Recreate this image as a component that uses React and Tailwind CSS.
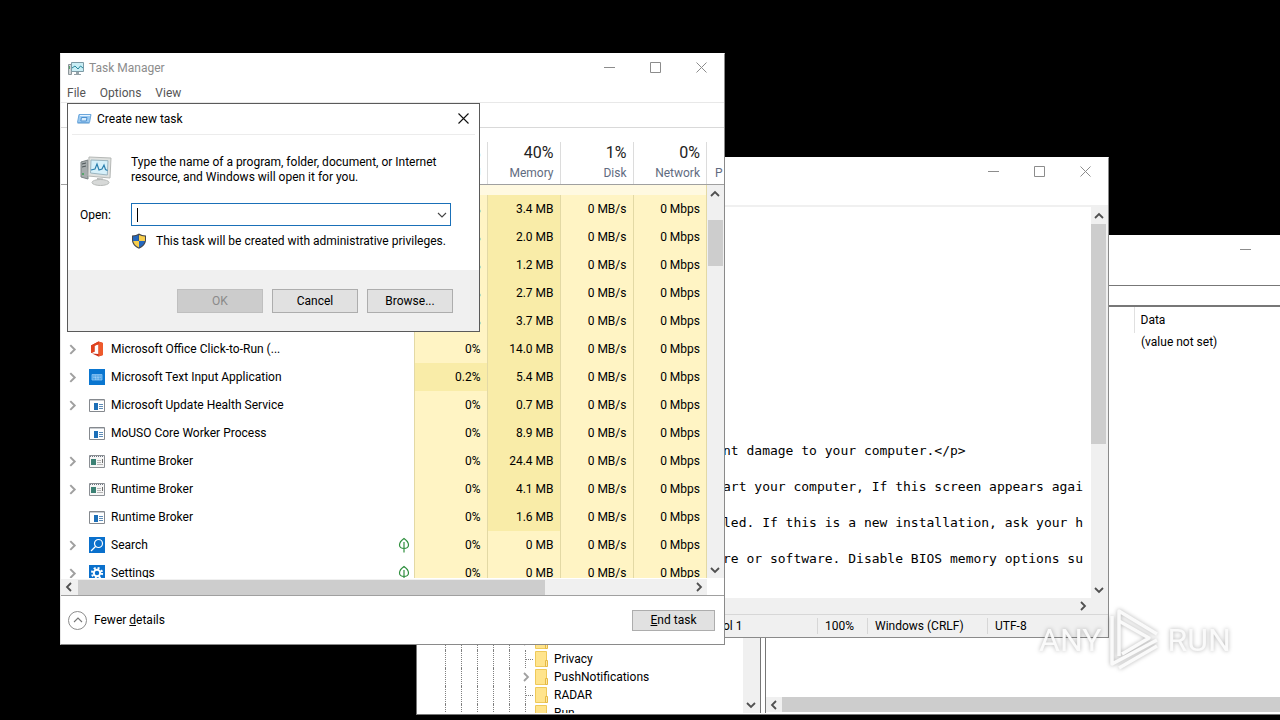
import clsx from "clsx";

const procesos = [
  { name: "", mem: "3.4 MB" },
  { name: "", mem: "2.0 MB" },
  { name: "", mem: "1.2 MB" },
  { name: "", mem: "2.7 MB" },
  { name: "", mem: "3.7 MB" },
  { name: "Microsoft Office Click-to-Run (...", icon: "office", open: true, mem: "14.0 MB" },
  { name: "Microsoft Text Input Application", icon: "keyboard", open: true, cpu: "0.2%", mem: "5.4 MB" },
  { name: "Microsoft Update Health Service", icon: "app", open: true, mem: "0.7 MB" },
  { name: "MoUSO Core Worker Process", icon: "app", mem: "8.9 MB" },
  { name: "Runtime Broker", icon: "broker", open: true, mem: "24.4 MB" },
  { name: "Runtime Broker", icon: "broker", open: true, mem: "4.1 MB" },
  { name: "Runtime Broker", icon: "app", mem: "1.6 MB" },
  { name: "Search", icon: "search", open: true, leaf: true, mem: "0 MB" },
  { name: "Settings", icon: "gear", open: true, leaf: true, mem: "0 MB" },
];

const treeItems = [
  { name: "PrecisionTouchPad", open: true },
  { name: "Privacy" },
  { name: "PushNotifications", open: true },
  { name: "RADAR" },
  { name: "Run" },
];

const noteLines = [
  "nt damage to your computer.</p>",
  "art your computer, If this screen appears agai",
  "led. If this is a new installation, ask your h",
  "re or software. Disable BIOS memory options su",
];

function Chevron({ dir, className = "size-2.5 text-[#505050]", thin }) {
  const paths = {
    up: "M1 7 5 3l4 4",
    down: "M1 3l4 4 4-4",
    left: "M7 1 3 5l4 4",
    right: "M3 1l4 4-4 4",
  };
  return (
    <svg viewBox="0 0 10 10" className={clsx("shrink-0", className)} fill="none" stroke="currentColor" strokeWidth={thin ? 1.1 : 1.8}>
      <path d={paths[dir]} />
    </svg>
  );
}

function ScrollButton({ dir }) {
  return (
    <button aria-label={"Scroll " + dir} className="flex h-[17px] w-4 shrink-0 items-center justify-center bg-[#f0f0f0]">
      <Chevron dir={dir} />
    </button>
  );
}

function WindowButtons() {
  return (
    <div className="flex text-[#8c8c8c]">
      <button aria-label="Minimize" className="flex h-[27px] w-[46px] items-center justify-center">
        <svg viewBox="0 0 11 11" className="size-[11px]" stroke="currentColor"><path d="M0 5.5h11" /></svg>
      </button>
      <button aria-label="Maximize" className="flex h-[27px] w-[46px] items-center justify-center">
        <svg viewBox="0 0 11 11" className="size-[11px]" fill="none" stroke="currentColor"><path d="M.5.5h10v10H.5z" /></svg>
      </button>
      <button aria-label="Close" className="flex h-[27px] w-[46px] items-center justify-center">
        <svg viewBox="0 0 11 11" className="size-[11px]" stroke="currentColor"><path d="m.5.5 10 10M10.5.5l-10 10" /></svg>
      </button>
    </div>
  );
}

function ProcessIcon({ type }) {
  if (type === "office") {
    return (
      <svg viewBox="0 0 16 16" className="size-4">
        <path d="M2 4.500 9.500.5 14 2v12l-4.500 1.500L3 12.500l6.500.6V3.300L5.500 4.800v6L2 12z" fill="#c8301c" />
        <path d="M9.500.5 14 2v12l-4.500 1.500z" fill="#ee5a2c" />
        <path d="M2 4.500 9.500.5v2.800L5.500 4.800v6L2 12z" fill="#e0431f" />
      </svg>
    );
  }
  if (type === "keyboard") {
    return (
      <svg viewBox="0 0 16 16" className="size-4">
        <path d="M0 0h16v16H0z" fill="#0a76d0" />
        <path d="M3 5.500h10v5.500H3z" fill="#4fa3e6" stroke="#8cc6f5" strokeWidth=".8" />
        <path d="M4.500 7h7M4.500 8.500h7M6 10h4" stroke="#cfe8fc" strokeWidth=".7" strokeDasharray="1 .6" />
      </svg>
    );
  }
  if (type === "search") {
    return (
      <svg viewBox="0 0 16 16" className="size-4" fill="none">
        <path d="M0 0h16v16H0z" fill="#0a70cc" />
        <circle cx="9.500" cy="6.500" r="4" stroke="#fff" strokeWidth="1.200" />
        <path d="m6.500 9.500-4.500 4.500" stroke="#fff" strokeWidth="1.200" />
      </svg>
    );
  }
  if (type === "gear") {
    return (
      <svg viewBox="0 0 16 16" className="size-4" fill="none">
        <path d="M0 0h16v16H0z" fill="#0a70cc" />
        <circle cx="8" cy="8" r="5" stroke="#fff" strokeWidth="2.200" strokeDasharray="2 1.927" />
        <circle cx="8" cy="8" r="3.200" stroke="#fff" strokeWidth="2" />
      </svg>
    );
  }
  if (type === "broker") {
    return (
      <svg viewBox="0 0 16 16" className="size-4">
        <path d="M.5 2.500h15v12H.5z" fill="#f6f6f6" stroke="#8b8f94" />
        <path d="M1 3.500h14" stroke="#6c7480" strokeWidth="1.200" strokeDasharray="1 1" />
        <path d="M2 6h5v6H2z" fill="#3b8074" />
        <path d="M8 7.500h4M8 9.500h4M8 11.500h6" stroke="#b5b5b5" />
        <path d="M13.500 6v4" stroke="#6c6c6c" />
      </svg>
    );
  }
  return (
    <svg viewBox="0 0 16 16" className="size-4">
      <path d="M.5 2.500h15v12H.5z" fill="#fff" stroke="#85898e" />
      <path d="M1 3.500h14" stroke="#c9cdd2" />
      <path d="M5 6h4v7H5z" fill="#1c6fb8" />
      <path d="M10 7.500h4M10 9.500h4M10 11.500h4" stroke="#5f8db8" />
    </svg>
  );
}

function Leaf() {
  return (
    <svg viewBox="0 0 12 16" className="h-4 w-3" fill="none" stroke="#2f8f3e" strokeWidth="1.200">
      <path d="M6 1.500C9 3.500 10.500 5.500 10.500 8c0 2-2 3.500-4.500 3.500S1.500 10 1.500 8C1.500 5.500 3 3.500 6 1.500zM6 5v10.500" />
    </svg>
  );
}

function Columns() {
  return (
    <colgroup>
      <col className="w-[353px]" />
      <col className="w-[73px]" />
      <col className="w-[73px]" />
      <col className="w-[73px]" />
      <col className="w-[73px]" />
    </colgroup>
  );
}

function Usage({ value, dark }) {
  return (
    <td className={clsx("border-l border-[#e3d9a5] pr-1.5 text-right", dark ? "bg-[#f9eca8]" : "bg-[#fff4c4]")}>
      {value}
    </td>
  );
}

function HeaderCell({ value, label }) {
  return (
    <th className="border-l border-[#dcdcdc] pr-1.5 text-right font-normal">
      <span className="block text-base leading-5 text-[#222]">{value}</span>
      <span className="block leading-5 text-[#5f6b80]">{label}</span>
    </th>
  );
}

function RegistryEditor() {
  return (
    <section className="absolute top-[235px] left-[416px] w-[945px] border border-t-white border-r-[#777] border-b-[#777] border-l-[#777] bg-white">
      <div className="flex h-7 justify-end">
        <WindowButtons />
      </div>
      <div className="h-[21px]" />
      <div className="h-[22px] border-t border-b-2 border-[#777]" />
      <div className="flex h-[407px] pb-px">
        <div className="flex w-[343px] shrink-0">
          <ul className="flex-1 overflow-hidden pt-[325px]">
            {treeItems.map((item) => (
              <li key={item.name} className="flex h-[18px] items-center pl-7">
                <span className="h-full w-4 border-l border-dotted border-[#808080]" />
                <span className="h-full w-4 border-l border-dotted border-[#808080]" />
                <span className="h-full w-4 border-l border-dotted border-[#808080]" />
                <span className="h-full w-4 border-l border-dotted border-[#808080]" />
                <span className="h-full w-3 border-l border-dotted border-[#808080]" />
                {item.open ? (
                  <span className="flex w-3.5">
                    <Chevron dir="right" className="size-2.5 text-[#a0a0a0]" />
                  </span>
                ) : (
                  <span className="flex h-full w-3.5 items-center pl-1">
                    <span className="flex h-full w-2 items-center border-l border-dotted border-[#808080]">
                      <span className="w-full border-t border-dotted border-[#808080]" />
                    </span>
                  </span>
                )}
                <svg viewBox="0 0 13 16" className="h-4 w-[13px]">
                  <path d="M.5.5h11v15H.5z" fill="#ffe48c" stroke="#eec95a" />
                  <path d="M10.500 9.500h2v6h-2z" fill="#ffe9a2" stroke="#e5b945" />
                </svg>
                <span className="pl-1.5">{item.name}</span>
              </li>
            ))}
          </ul>
          <div className="flex w-[17px] flex-col justify-end bg-[#f0f0f0]">
            <ScrollButton dir="down" />
          </div>
        </div>
        <div className="w-1.5 shrink-0 border-x border-[#777]" />
        <div className="flex flex-1 flex-col justify-between">
          <table className="w-full table-fixed border-collapse text-left">
            <colgroup>
              <col className="w-[368px]" />
              <col />
            </colgroup>
            <thead>
              <tr className="h-[26px]">
                <th />
                <th className="border-l border-[#e0e0e0] pl-1.5 font-normal">Data</th>
              </tr>
            </thead>
            <tbody>
              <tr className="h-[18px]">
                <td />
                <td className="pl-[7px]">(value not set)</td>
              </tr>
            </tbody>
          </table>
          <div className="mb-px flex h-[15px] items-center overflow-hidden bg-[#f0f0f0]">
            <ScrollButton dir="left" />
            <div className="h-full flex-1 bg-[#cdcdcd]" />
          </div>
        </div>
      </div>
    </section>
  );
}

function Notepad() {
  return (
    <section className="absolute top-[157px] left-[480px] w-[629px] border border-t-white border-r-[#8a8a8a] border-b-[#8a8a8a] border-l-[#e6e6e6] bg-white">
      <div className="flex h-7 justify-end">
        <WindowButtons />
      </div>
      <div className="h-[21px] border-b-2 border-[#f0f0f0]" />
      <div className="flex h-[391px]">
        <pre className="flex-1 overflow-hidden pt-[226px] pl-[242px] font-['DejaVu_Sans_Mono',monospace] text-[13px] leading-9">
          {noteLines.join("\n")}
        </pre>
        <div className="flex w-[17px] flex-col bg-[#f0f0f0]">
          <ScrollButton dir="up" />
          <div className="mr-0.5 h-[220px] bg-[#cdcdcd]" />
          <div className="flex-1" />
          <ScrollButton dir="down" />
        </div>
      </div>
      <div className="flex h-4 items-center justify-end overflow-hidden bg-[#f0f0f0] pr-[17px]">
        <ScrollButton dir="right" />
      </div>
      <div className="flex h-[23px] items-center border-t border-[#d7d7d7] bg-[#f0f0f0]">
        <span className="flex-1 pl-[206px]">Ln 1, Col 1</span>
        <span className="w-[50px] border-l border-[#d7d7d7] pl-[7px]">100%</span>
        <span className="w-[120px] border-l border-[#d7d7d7] pl-[7px]">Windows (CRLF)</span>
        <span className="w-[121px] border-l border-[#d7d7d7] pl-[7px]">UTF-8</span>
      </div>
    </section>
  );
}

function TaskManager() {
  return (
    <section className="absolute top-[53px] left-[60px] w-[665px] border border-t-white border-r-[#8a8a8a] border-b-[#8a8a8a] border-l-[#e6e6e6] bg-white">
      <header className="flex h-7 items-start justify-between">
        <h1 className="flex h-7 items-center gap-1 pl-1.5 text-[#8c8c8c]">
          <svg viewBox="0 0 18 16" className="h-4 w-[18px]">
            <path d="M1.500 4.500h3v10h-3z" fill="#cfd4d6" stroke="#8d979b" />
            <path d="M2.500 6v3" stroke="#59a06d" />
            <path d="M4.500 2.500h12v9h-12z" fill="#c9eef5" stroke="#7d9aa5" />
            <path d="m5 8 3-2 3 3 2.500-3L16 8" fill="none" stroke="#27879c" />
            <path d="M9 12h3v2H9zM7 14h7v1H7z" fill="#96a3a8" />
          </svg>
          Task Manager
        </h1>
        <WindowButtons />
      </header>
      <nav className="flex h-[21px] items-center gap-3.5 border-b border-[#e8e8e8] pt-0.5 pl-1.5 text-[#555]">
        <button>File</button>
        <button>Options</button>
        <button>View</button>
      </nav>
      <div className="mb-3.5 h-[25px] border-b border-[#d9d9d9]" />

      <div className="flex h-[43px] border-b border-[#a0a0a0]">
        <table className="w-[645px] shrink-0 table-fixed">
          <Columns />
          <thead>
            <tr className="h-[42px]">
              <th />
              <HeaderCell value="3%" label="CPU" />
              <HeaderCell value="40%" label="Memory" />
              <HeaderCell value="1%" label="Disk" />
              <HeaderCell value="0%" label="Network" />
            </tr>
          </thead>
        </table>
        <span className="flex-1 overflow-hidden border-l border-[#dcdcdc] pt-[21px] pl-2 leading-5 text-[#5f6b80]">P</span>
      </div>

      <div className="flex h-[393px] overflow-hidden">
        <div className="w-[646px] shrink-0 border-r border-[#e3d9a5]">
          <table className="w-full table-fixed">
            <Columns />
            <tbody>
              <tr className="h-2.5">
                <td />
                <td colSpan={4} className="bg-[#fff9e1]" />
              </tr>
              {procesos.map((p, index) => (
                <tr key={index} className="h-7">
                  <td>
                    <div className="flex items-center pl-1.5">
                      <span className="w-[22px]">
                        {p.open && <Chevron dir="right" className="size-[11px] text-[#a0a0a0]" />}
                      </span>
                      {p.icon && <ProcessIcon type={p.icon} />}
                      <span className="flex-1 pl-1.5">{p.name}</span>
                      {p.leaf && (
                        <span className="pr-1">
                          <Leaf />
                        </span>
                      )}
                    </div>
                  </td>
                  <Usage value={p.cpu || "0%"} dark={p.cpu} />
                  <Usage value={p.mem} dark={p.mem !== "0 MB"} />
                  <Usage value="0 MB/s" />
                  <Usage value="0 Mbps" />
                </tr>
              ))}
            </tbody>
          </table>
        </div>
        <div className="flex h-[393px] flex-1 flex-col bg-[#f0f0f0]">
          <ScrollButton dir="up" />
          <div className="mt-[18px] mr-px ml-px h-[46px] bg-[#cdcdcd]" />
          <div className="flex-1" />
          <ScrollButton dir="down" />
        </div>
      </div>

      <div className="mt-px mr-[17px] flex h-4 items-center overflow-hidden bg-[#f0f0f0]">
        <ScrollButton dir="left" />
        <div className="ml-px h-[15px] w-[467px] bg-[#cdcdcd]" />
        <div className="flex-1" />
        <ScrollButton dir="right" />
      </div>

      <footer className="flex h-[49px] items-center justify-between border-t border-[#a0a0a0] pr-[9px] pl-[7px]">
        <button className="flex items-center gap-[7px]">
          <span className="flex size-[19px] items-center justify-center rounded-full border border-[#8c8c8c]">
            <Chevron dir="up" thin className="size-2.5 text-[#777]" />
          </span>
          <span>Fewer <u>d</u>etails</span>
        </button>
        <button className="h-[21px] w-[83px] border border-[#adadad] bg-[#e1e1e1]"><u>E</u>nd task</button>
      </footer>
    </section>
  );
}

function RunDialog() {
  return (
    <section role="dialog" aria-label="Create new task" className="absolute top-[103px] left-[67px] w-[413px] border border-[#5a5a5a] bg-white">
      <header className="mx-1 flex h-[31px] items-center justify-between border-b border-[#ececec] pl-1">
        <h2 className="flex items-center gap-[5px]">
          <svg viewBox="0 0 16 16" className="size-4">
            <path d="M3 3.500h12l-1.500 8H1.500z" fill="#9ccbf2" stroke="#6ca7dc" />
            <path d="M4 4.500h10" stroke="#e7f4ff" />
            <path d="M5.500 6.500h5.500l-.7 3.500H4.800z" fill="#d9edfc" stroke="#4e90cf" />
            <path d="M1.500 12.500h12" stroke="#a9c9e4" />
          </svg>
          Create new task
        </h2>
        <button aria-label="Close" className="flex h-[29px] w-[23px] items-center justify-center self-start">
          <svg viewBox="0 0 11 11" className="size-[11px]" stroke="#111" strokeWidth="1.100"><path d="m.5.5 10 10M10.500.5l-10 10" /></svg>
        </button>
      </header>

      <div className="px-3 pt-5 pb-[21px]">
        <div className="flex h-12">
          <div className="w-[51px] shrink-0">
            <svg viewBox="0 0 34 32" className="h-8 w-[34px]">
              <path d="m1 7 7-2v19l-7-2z" fill="#a6acad" stroke="#7c8384" />
              <path d="m2 9 4-1M2 12l4-1" stroke="#4c5557" />
              <path d="M3 18v2" stroke="#56a56b" strokeWidth="2" />
              <path d="m9 2 22 1-1 20-22-2z" fill="#dfe1df" stroke="#b5b8b6" />
              <path d="m11 5 17 .7-.7 14.300L10.500 18z" fill="#d6f0fa" stroke="#9bb5c0" />
              <path d="m11 15 4-1 2-5 2 6 3-1 2-4 1.500 4.500 2 1" fill="none" stroke="#2b7fae" strokeWidth="1.200" />
              <path d="m17 23 6 .5V26h-6z" fill="#b4b7b6" />
              <ellipse cx="20.500" cy="27.500" rx="8.500" ry="3" fill="#d7d9d8" stroke="#b5b8b6" />
            </svg>
          </div>
          <p className="leading-[15px]">
            Type the name of a program, folder, document, or Internet
            <br />
            resource, and Windows will open it for you.
          </p>
        </div>
        <div className="flex h-[23px] items-center">
          <label htmlFor="open" className="w-[51px]">Open:</label>
          <div className="flex h-full w-80 items-center border border-[#1a70b8] pr-[3px] pl-[5px]">
            <span className="h-3.5 w-px bg-black" />
            <input id="open" type="text" className="min-w-0 flex-1 outline-none" />
            <button aria-label="Show list">
              <Chevron dir="down" thin className="size-2.5 text-[#444]" />
            </button>
          </div>
        </div>
        <div className="mt-1.5 flex h-[17px] items-center gap-[9px] pl-[51px]">
          <svg viewBox="0 0 16 16" className="size-4">
            <path d="M8 .5c2 1.300 4 1.800 7 2V7c0 4-3 7-7 8.700C4 14 1 11 1 7V2.500c3-.2 5-.7 7-2z" fill="#45474c" />
            <path d="M7.500 2v6H2V3.500c2-.1 4-.6 5.500-1.500z" fill="#2467bd" />
            <path d="M8 2c1.700.9 3.500 1.400 6 1.500V8H8z" fill="#f8ce4b" />
            <path d="M2.200 8H8v6.500C4.500 13 2.600 10.500 2.200 8z" fill="#f8ce4b" />
            <path d="M8 8h5.800c-.4 2.500-2.300 5-5.800 6.500z" fill="#2467bd" />
          </svg>
          This task will be created with administrative privileges.
        </div>
      </div>

      <footer className="flex h-[61px] justify-end gap-[9px] bg-[#f0f0f0] pt-[19px] pr-[26px]">
        <button disabled className="h-6 w-[86px] border border-[#bfbfbf] bg-[#cccccc] text-[#8a8a8a]">OK</button>
        <button className="h-6 w-[86px] border border-[#adadad] bg-[#e1e1e1]">Cancel</button>
        <button className="h-6 w-[86px] border border-[#adadad] bg-[#e1e1e1]">Browse...</button>
      </footer>
    </section>
  );
}

function Watermark() {
  return (
    <div className="absolute top-[608px] left-[1039px] flex h-16 items-center gap-1.5 font-['Liberation_Sans_Narrow','Roboto',sans-serif] text-[32px] text-[#fafafa] drop-shadow-[0_0_2px_rgba(0,0,0,0.3)]">
      <span>ANY</span>
      <svg viewBox="0 0 54 64" className="h-16 w-[54px]" fill="none" stroke="currentColor" strokeWidth="3.500" strokeLinejoin="round">
        <path d="M12 48V3l38 23" />
        <path d="M5 8v48l45-24" />
        <path d="m12 13 30 17-27 16" />
        <path d="m12 60 38-22" />
      </svg>
      <span>RUN</span>
    </div>
  );
}

export default function App() {
  return (
    <main className="relative h-screen overflow-hidden bg-black font-['Roboto',sans-serif] text-xs text-black">
      <RegistryEditor />
      <Notepad />
      <TaskManager />
      <RunDialog />
      <Watermark />
    </main>
  );
}
